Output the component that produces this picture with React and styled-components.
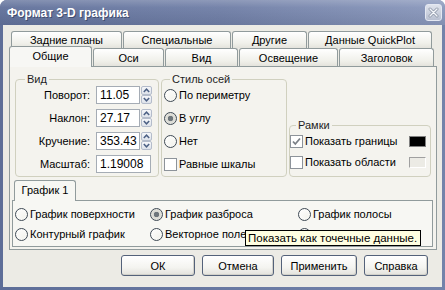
import styled, { createGlobalStyle } from "styled-components";

const Global = createGlobalStyle`
  html, body { margin: 0; padding: 0; background: #fff; }
  body {
    font-family: "Liberation Sans", Arial, sans-serif;
    font-size: 11px;
    color: #000;
  }
  * { box-sizing: border-box; }
`;

const Window = styled.div`
  width: 445px;
  height: 290px;
  display: flex;
  flex-direction: column;
  background: linear-gradient(90deg, #5e6e98, #7383aa);
  border-radius: 7px 7px 0 0;
  overflow: hidden;
`;

const TitleBar = styled.div`
  height: 25px;
  flex: none;
  display: flex;
  align-items: center;
  justify-content: space-between;
  padding: 0 3px 0 7px;
  background:
    linear-gradient(180deg, rgba(255,255,255,0.22) 0%, rgba(255,255,255,0.05) 30%, rgba(0,0,0,0.06) 100%),
    linear-gradient(90deg, #61719b 0%, #6f7ea6 50%, #8a98bc 100%);
  color: #fff;
  font-weight: bold;
  font-size: 12px;
  text-shadow: 1px 1px 0 rgba(40, 50, 80, 0.6);
`;

const CloseBtn = styled.div`
  width: 17px;
  height: 17px;
  display: flex;
  align-items: center;
  justify-content: center;
  border: 1px solid #e4e8f2;
  border-radius: 3px;
  background: linear-gradient(180deg, #dfe3ec, #b9c0d1);
`;

const Client = styled.div`
  flex: 1;
  margin: 0 3px 3px;
  background: #ecebe5;
  display: flex;
  flex-direction: column;
  padding: 6px 0 0 6px;
`;

const TabRow = styled.div`
  display: flex;
  gap: 1px;
  align-items: flex-end;
  position: relative;
  height: ${(p) => p.$h}px;
  margin-left: ${(p) => p.$left || 0}px;
  margin-top: ${(p) => p.$top || 0}px;
  z-index: ${(p) => p.$z || 0};
`;

const Tab = styled.div`
  width: ${(p) => p.$w}px;
  height: ${(p) => (p.$active ? 21 : p.$back ? 17 : 18)}px;
  margin-bottom: ${(p) => (p.$active ? -1 : 0)}px;
  display: flex;
  align-items: center;
  justify-content: center;
  padding-bottom: ${(p) => (p.$active ? 3 : 0)}px;
  border: 1px solid #919b9c;
  border-bottom: none;
  border-radius: 3px 3px 0 0;
  background: ${(p) =>
    p.$active ? "#f7f7f4" : "linear-gradient(180deg, #ffffff 0%, #f0f0ea 70%, #e4e3dc 100%)"};
  position: relative;
  z-index: ${(p) => (p.$active ? 2 : 0)};
`;

const Panel = styled.div`
  width: 428px;
  height: 184px;
  border: 1px solid #919b9c;
  background: #f4f3ee;
  padding: 6px 0 0 5px;
  position: relative;
  z-index: 1;
`;

const TopSection = styled.div`
  display: flex;
  gap: 2px;
  height: 104px;
  align-items: stretch;
`;

const Group = styled.fieldset`
  width: ${(p) => p.$w}px;
  margin: ${(p) => p.$top || 0}px 0 0 0;
  padding: 0 4px 0 ${(p) => p.$padL || 0}px;
  border: 1px solid #d0d0bf;
  border-radius: 4px;
  min-width: 0;
`;

const Legend = styled.legend`
  padding: 0 2px;
  margin-left: 6px;
  line-height: 13px;
  color: #1e1e1e;
`;

const FieldGrid = styled.div`
  display: grid;
  grid-template-columns: 71px auto;
  column-gap: 6px;
  row-gap: 5px;
  align-items: center;
`;

const FieldLabel = styled.div`
  text-align: right;
`;

const InputWrap = styled.div`
  display: flex;
  align-items: center;
  gap: 1px;
`;

const NumberBox = styled.div`
  width: ${(p) => p.$w}px;
  height: 18px;
  border: 1px solid #a5acb5;
  background: #fff;
  padding-left: 3px;
  line-height: 16px;
  font-size: 12px;
`;

const Spin = styled.div`
  width: 11px;
  height: 18px;
  display: flex;
  flex-direction: column;
`;

const SpinBtn = styled.div`
  flex: 1;
  display: flex;
  align-items: center;
  justify-content: center;
  border: 1px solid #b4bccb;
  border-radius: 2px;
  background: linear-gradient(180deg, #f6f7fa, #dde2ea);
`;

const OptionList = styled.div`
  display: flex;
  flex-direction: column;
  gap: 5px;
`;

const Option = styled.div`
  height: 18px;
  display: flex;
  align-items: center;
  gap: 2px;
  white-space: nowrap;
`;

const RadioCircle = styled.span`
  width: 13px;
  height: 13px;
  flex: none;
  border-radius: 50%;
  border: 1px solid #3f4a55;
  background: ${(p) =>
    p.$checked
      ? "radial-gradient(circle at 50% 50%, #6e767c 0 2.5px, #d9d9d3 3px, #ecece7 100%)"
      : "radial-gradient(circle at 70% 70%, #f4f4ef, #ffffff)"};
`;

const CheckBox = styled.span`
  width: 13px;
  height: 13px;
  flex: none;
  border: 1px solid #8d939a;
  background: #fff;
  display: flex;
  align-items: center;
  justify-content: center;
`;

const FrameRow = styled.div`
  height: 18px;
  display: flex;
  align-items: center;
  justify-content: space-between;
`;

const FrameRows = styled.div`
  display: flex;
  flex-direction: column;
  gap: 3px;
`;

const Swatch = styled.span`
  width: 17px;
  height: 11px;
  border: 1px solid;
  border-color: ${(p) => (p.$color ? "#808080" : "#a0a0a0 #fff #fff #a0a0a0")};
  background: ${(p) => p.$color || "#ecebe5"};
`;

const GraphArea = styled.div`
  margin: 3px 0 0 -3px;
`;

const GraphTabs = styled.div`
  display: flex;
  padding-left: 2px;
  position: relative;
  z-index: 2;
`;

const GraphTab = styled.div`
  width: 62px;
  height: 21px;
  margin-bottom: -1px;
  display: flex;
  align-items: center;
  justify-content: center;
  padding-bottom: 2px;
  border: 1px solid #919b9c;
  border-bottom: none;
  border-radius: 3px 3px 0 0;
  background: #f7f7f3;
`;

const GraphBox = styled.div`
  width: 421px;
  height: 47px;
  border: 1px solid #919b9c;
  background: #f7f7f3;
  position: relative;
  padding: 4px 0 0 2px;
`;

const GraphGrid = styled.div`
  display: grid;
  grid-template-columns: 135px 148px 1fr;
  grid-auto-rows: 18px;
  row-gap: 2px;
`;

const Tooltip = styled.div`
  position: absolute;
  left: 232px;
  top: 29px;
  height: 16px;
  padding: 0 3px 0 2px;
  border: 1px solid #000;
  background: #ffffe1;
  line-height: 14px;
  font-size: 11.5px;
  white-space: nowrap;
  z-index: 5;
`;

const ButtonRow = styled.div`
  display: flex;
  justify-content: flex-end;
  gap: 7px;
  padding-right: 14px;
  margin-top: 5px;
`;

const Button = styled.div`
  width: ${(p) => p.$w}px;
  height: 21px;
  display: flex;
  align-items: center;
  justify-content: center;
  border: 1px solid #54627a;
  border-radius: 3px;
  background: linear-gradient(180deg, #ffffff 0%, #f4f4f0 60%, #e3e2dc 100%);
  box-shadow: inset -1px -1px 0 #d2d1ca;
`;

const Arrow = ({ up }) => (
  <svg width="7" height="5" viewBox="0 0 7 5">
    <polyline
      points={up ? "0.8,4 3.5,1.2 6.2,4" : "0.8,1 3.5,3.8 6.2,1"}
      fill="none"
      stroke="#4d6185"
      strokeWidth="1.5"
    />
  </svg>
);

const Radio = ({ checked, children }) => (
  <Option>
    <RadioCircle $checked={checked} />
    {children && <span>{children}</span>}
  </Option>
);

const Check = ({ checked, children }) => (
  <Option>
    <CheckBox>
      {checked && (
        <svg width="9" height="9" viewBox="0 0 9 9">
          <polyline points="1,4.5 3.3,7 8,1.5" fill="none" stroke="#7b8087" strokeWidth="1.8" />
        </svg>
      )}
    </CheckBox>
    <span>{children}</span>
  </Option>
);

const SpinField = ({ value }) => (
  <InputWrap>
    <NumberBox $w={44}>{value}</NumberBox>
    <Spin>
      <SpinBtn>
        <Arrow up />
      </SpinBtn>
      <SpinBtn>
        <Arrow />
      </SpinBtn>
    </Spin>
  </InputWrap>
);

const backTabs = [
  ["Задние планы", 111],
  ["Специальные", 108],
  ["Другие", 75],
  ["Данные QuickPlot", 124],
];

const frontTabs = [
  ["Общие", 83],
  ["Оси", 71],
  ["Вид", 73],
  ["Освещение", 99],
  ["Заголовок", 95],
];

const App = () => {
  return (
    <>
      <Global />
      <Window>
        <TitleBar>
          <span>Формат 3-D графика</span>
          <CloseBtn>
            <svg width="11" height="11" viewBox="0 0 11 11">
              <path d="M2 2 L9 9 M9 2 L2 9" stroke="#8e97a8" strokeWidth="3" strokeLinecap="round" />
              <path d="M2 2 L9 9 M9 2 L2 9" stroke="#f4f6fa" strokeWidth="1.4" strokeLinecap="round" />
            </svg>
          </CloseBtn>
        </TitleBar>
        <Client>
          <TabRow $h={17} $left={2}>
            {backTabs.map(([t, w]) => (
              <Tab key={t} $w={w} $back>
                {t}
              </Tab>
            ))}
          </TabRow>
          <TabRow $h={20} $top={-2} $z={2}>
            {frontTabs.map(([t, w], i) => (
              <Tab key={t} $w={w} $active={i === 0}>
                {t}
              </Tab>
            ))}
          </TabRow>
          <Panel>
            <TopSection>
              <Group $w={144} $padL={3}>
                <Legend>Вид</Legend>
                <FieldGrid>
                  <FieldLabel>Поворот:</FieldLabel>
                  <SpinField value="11.05" />
                  <FieldLabel>Наклон:</FieldLabel>
                  <SpinField value="27.17" />
                  <FieldLabel>Кручение:</FieldLabel>
                  <SpinField value="353.43" />
                  <FieldLabel>Масштаб:</FieldLabel>
                  <InputWrap>
                    <NumberBox $w={55}>1.19008</NumberBox>
                  </InputWrap>
                </FieldGrid>
              </Group>
              <Group $w={126} $padL={2}>
                <Legend>Стиль осей</Legend>
                <OptionList>
                  <Radio>По периметру</Radio>
                  <Radio checked>В углу</Radio>
                  <Radio>Нет</Radio>
                  <Check>Равные шкалы</Check>
                </OptionList>
              </Group>
              <Group $w={142} $top={46} $padL={0}>
                <Legend>Рамки</Legend>
                <FrameRows>
                  <FrameRow>
                    <Check checked>Показать границы</Check>
                    <Swatch $color="#000" />
                  </FrameRow>
                  <FrameRow>
                    <Check>Показать области</Check>
                    <Swatch />
                  </FrameRow>
                </FrameRows>
              </Group>
            </TopSection>
            <GraphArea>
              <GraphTabs>
                <GraphTab>График 1</GraphTab>
              </GraphTabs>
              <GraphBox>
                <GraphGrid>
                  <Radio>График поверхности</Radio>
                  <Radio checked>График разброса</Radio>
                  <Radio>График полосы</Radio>
                  <Radio>Контурный график</Radio>
                  <Radio>Векторное поле</Radio>
                  <Radio />
                </GraphGrid>
                <Tooltip>Показать как точечные данные.</Tooltip>
              </GraphBox>
            </GraphArea>
          </Panel>
          <ButtonRow>
            <Button $w={74}>ОК</Button>
            <Button $w={72}>Отмена</Button>
            <Button $w={76}>Применить</Button>
            <Button $w={64}>Справка</Button>
          </ButtonRow>
        </Client>
      </Window>
    </>
  );
};

export default App;
